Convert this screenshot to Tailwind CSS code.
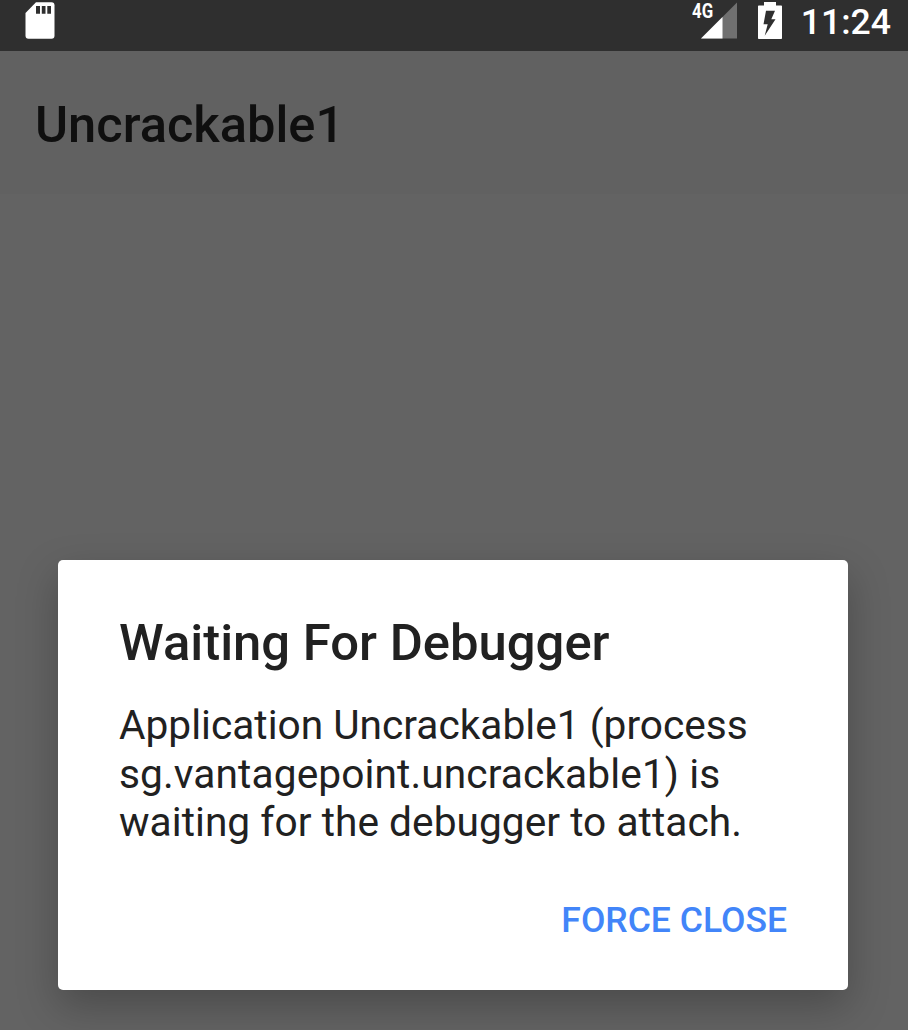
<!DOCTYPE html>
<html lang="en"><head><meta charset="utf-8"><title>Uncrackable1</title>
<script src="https://cdn.jsdelivr.net/npm/@tailwindcss/browser@4"></script></head>
<body class="h-[1030px] w-[908px] overflow-hidden bg-[#636363] font-[Roboto,sans-serif]">
<div class="flex h-full flex-col">
<header class="flex h-[51px] shrink-0 items-start bg-[#2f2f2f] pl-[25px] pr-[17px] text-white">
<svg class="mt-[2px] h-[37px] w-[30px]" viewBox="0 0 30 37"><path fill="#fff" d="M11 .3h15.5q3 0 3 3v30.400q0 3-3 3H3.500q-3 0-3-3V11z"/><path fill="#2f2f2f" d="M11 4h4v7.700h-4zM16.800 4h3.700v7.700h-3.700zM22.300 4h3.700v7.700h-3.700z"/></svg>
<div class="ml-auto flex items-start">
<span class="mt-[2px] -mr-[14px] w-[23px] origin-left scale-x-[0.82] text-[20.5px] leading-[18px] font-bold whitespace-nowrap">4G</span>
<svg class="mt-[2px] h-[37px] w-[36px]" viewBox="0 0 36 37"><path fill="#707070" d="M36 .5v36H0z"/><path fill="#fff" d="M21.500 15v21.500H0z"/></svg>
</div>
<svg class="ml-[21px] mt-[2px] h-[38px] w-[24px]" viewBox="0 0 24 38"><path fill="#fff" d="M6 0h12v3.500h5.200q.8 0 .8.8v31.900q0 .8-.8.8H.8q-.8 0-.8-.8V4.300q0-.8.8-.8H6z"/><path fill="#2f2f2f" d="M8 8.700h9L13.300 17.300h4.200L6.700 33.700 9.700 22.300H5.500z"/></svg>
<span class="ml-[19px] text-[35.6px] leading-[44px] font-medium">11:24</span>
</header>
<div class="flex h-[143px] shrink-0 items-center bg-[#616161] pl-[35px] pt-[4px]"><h1 class="text-[50.6px] leading-[60px] font-medium text-[#0f0f0f]">Uncrackable1</h1></div>
<main class="flex grow items-end pb-[40px] pl-[58px]">
<section class="flex h-[430px] w-[790px] flex-col rounded-[5px] bg-white px-[61px] pt-[53px] text-[#212121] shadow-[0_16px_40px_rgba(0,0,0,0.25)]">
<h2 class="text-[50.8px] leading-[60px] font-medium">Waiting For Debugger</h2>
<div class="mt-[28px] text-[40.67px] leading-[48.5px] whitespace-nowrap"><p>Application Uncrackable1 (process</p><p class="tracking-[0.1px]">sg.vantagepoint.uncrackable1) is</p><p class="tracking-[0.03px]">waiting for the debugger to attach.</p></div>
<button class="mt-[49px] self-end text-[35.5px] leading-[48px] font-medium text-[#4285f9]">FORCE CLOSE</button>
</section></main></div></body></html>
